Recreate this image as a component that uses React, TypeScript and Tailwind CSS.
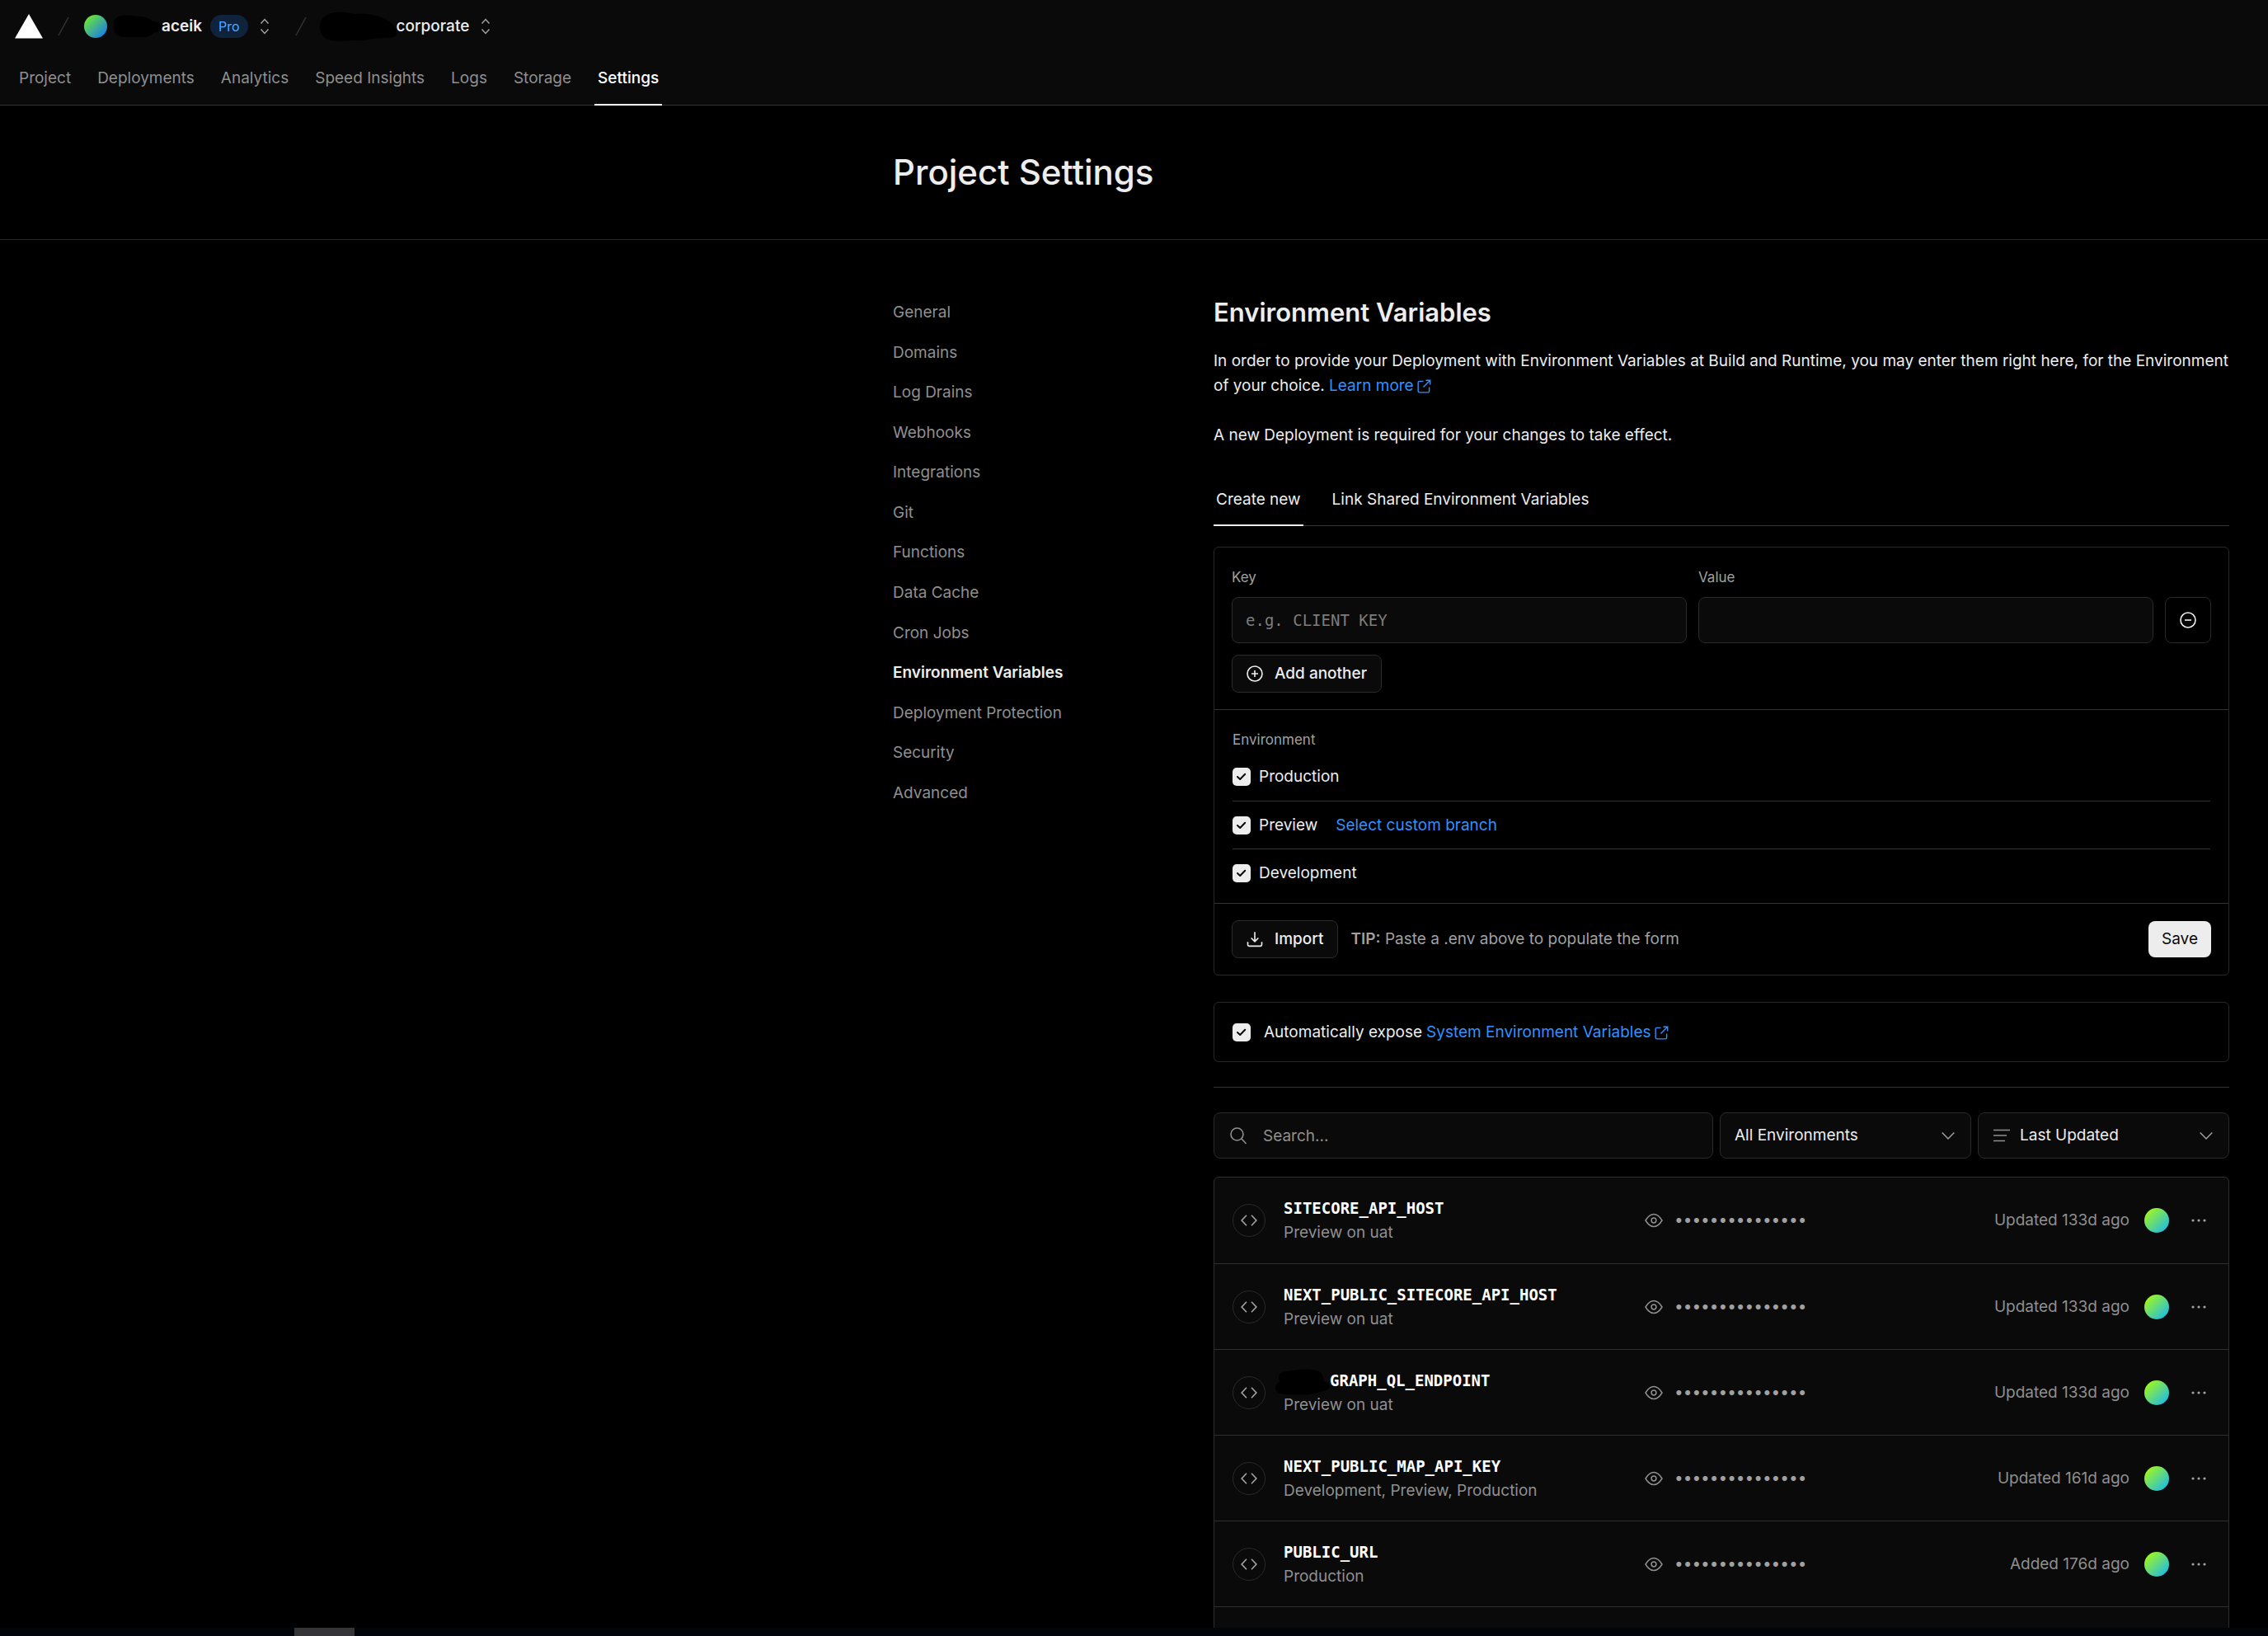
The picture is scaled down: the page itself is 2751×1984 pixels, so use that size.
import type { ReactNode } from "react";

const tabs = ["Project", "Deployments", "Analytics", "Speed Insights", "Logs", "Storage", "Settings"];

const sections = [
  "General",
  "Domains",
  "Log Drains",
  "Webhooks",
  "Integrations",
  "Git",
  "Functions",
  "Data Cache",
  "Cron Jobs",
  "Environment Variables",
  "Deployment Protection",
  "Security",
  "Advanced",
];

const variables = [
  { name: "SITECORE_API_HOST", scope: "Preview on uat", time: "Updated 133d ago" },
  { name: "NEXT_PUBLIC_SITECORE_API_HOST", scope: "Preview on uat", time: "Updated 133d ago" },
  { name: "GRAPH_QL_ENDPOINT", scope: "Preview on uat", time: "Updated 133d ago", redacted: true },
  { name: "NEXT_PUBLIC_MAP_API_KEY", scope: "Development, Preview, Production", time: "Updated 161d ago" },
  { name: "PUBLIC_URL", scope: "Production", time: "Added 176d ago" },
];

const mono = "font-['DejaVu_Sans_Mono',monospace]";

function Icon({ className, children }: { className: string; children: ReactNode }) {
  return (
    <svg
      viewBox="0 0 16 16"
      fill="none"
      stroke="currentColor"
      strokeWidth="1.3"
      className={className}
      aria-hidden="true"
    >
      {children}
    </svg>
  );
}

function Slash() {
  return (
    <svg viewBox="0 0 14 24" className="h-6 w-[14px] shrink-0" fill="none" stroke="#333" strokeWidth="1.5" aria-hidden="true">
      <path d="M13 1 1 23" />
    </svg>
  );
}

function Switcher({ label }: { label: string }) {
  return (
    <button aria-label={label} className="flex text-[#a1a1a1]">
      <svg viewBox="0 0 12 20" className="h-5 w-3" fill="none" stroke="currentColor" strokeWidth="1.5" aria-hidden="true">
        <path d="M1.500 6.500 6 1.500l4.500 5M1.500 13.500 6 18.500l4.500-5" />
      </svg>
    </button>
  );
}

function External() {
  return (
    <Icon className="ml-1 inline size-[17px] align-[-3px]">
      <path d="M7 2.200H2.600A1.500 1.500 0 0 0 1.100 3.700v9.700a1.500 1.500 0 0 0 1.500 1.500h9.700a1.500 1.500 0 0 0 1.500-1.500V9M9.800 1.200h5V6.200M14.800 1.200 7 9" />
    </Icon>
  );
}

function Chevron() {
  return (
    <Icon className="pointer-events-none absolute top-[19px] right-[19px] size-[18px] text-[#a1a1a1]">
      <path d="m1.500 4.800 6.500 6.700 6.500-6.700" />
    </Icon>
  );
}

function Check({ id }: { id: string }) {
  return (
    <span className="relative flex size-[22px] shrink-0">
      <input
        id={id}
        type="checkbox"
        defaultChecked
        className="size-[22px] appearance-none rounded-[5px] bg-[#ededed]"
      />
      <svg
        viewBox="0 0 22 22"
        className="pointer-events-none absolute inset-0 size-[22px]"
        fill="none"
        stroke="#0a0a0a"
        strokeWidth="2"
        strokeLinecap="round"
        strokeLinejoin="round"
        aria-hidden="true"
      >
        <path d="m6 11 3.200 3 6-6.200" />
      </svg>
    </span>
  );
}

function EnvironmentForm() {
  return (
    <form className="mt-[25px] rounded-md border border-[#292929]" onSubmit={(e) => e.preventDefault()}>
      <div className="px-[21px] py-5">
        <div className="flex items-end gap-[14px]">
          <div className="flex flex-1 flex-col">
            <label htmlFor="key" className="mb-2 text-[17px] leading-8 text-[#a1a1a1]">
              Key
            </label>
            <input
              id="key"
              placeholder="e.g. CLIENT_KEY"
              className={`${mono} h-14 w-full rounded-lg border border-[#2a2a2a] bg-[#0a0a0a] px-4 text-[19px] text-[#ededed] placeholder:text-[#7d7d7d]`}
            />
          </div>
          <div className="flex flex-1 flex-col">
            <label htmlFor="value" className="mb-2 text-[17px] leading-8 text-[#a1a1a1]">
              Value
            </label>
            <input
              id="value"
              className={`${mono} h-14 w-full rounded-lg border border-[#2a2a2a] bg-[#0a0a0a] px-4 text-[19px] text-[#ededed]`}
            />
          </div>
          <button
            type="button"
            aria-label="Remove"
            className="flex size-14 items-center justify-center rounded-lg border border-[#2a2a2a] text-[#ededed]"
          >
            <Icon className="size-5">
              <circle cx="8" cy="8" r="7.200" />
              <path d="M4.800 8h6.400" />
            </Icon>
          </button>
        </div>
        <button
          type="button"
          className="mt-[14px] flex h-[46px] items-center gap-[14px] rounded-lg border border-[#2a2a2a] bg-[#0a0a0a] px-[17px] font-medium"
        >
          <Icon className="size-5">
            <circle cx="8" cy="8" r="7.200" />
            <path d="M4.800 8h6.400M8 4.800v6.400" />
          </Icon>
          Add another
        </button>
      </div>

      <div role="group" aria-labelledby="environment" className="border-t border-[#333] px-[22px] pb-2">
        <p id="environment" className="pt-5 text-[17px] leading-8 text-[#a1a1a1]">
          Environment
        </p>
        <div className="flex h-[58px] items-center gap-[10px]">
          <Check id="production" />
          <label htmlFor="production">Production</label>
        </div>
        <div className="flex h-[58px] items-center gap-[10px] border-t border-[#333]">
          <Check id="preview" />
          <label htmlFor="preview">Preview</label>
          <button type="button" className="ml-3 text-[#3291ff]">
            Select custom branch
          </button>
        </div>
        <div className="flex h-[58px] items-center gap-[10px] border-t border-[#333]">
          <Check id="development" />
          <label htmlFor="development">Development</label>
        </div>
      </div>

      <div className="flex items-center border-t border-[#333] px-[21px] py-5">
        <button
          type="button"
          className="flex h-[46px] items-center gap-[14px] rounded-lg border border-[#2a2a2a] bg-[#0a0a0a] px-[17px] font-medium"
        >
          <Icon className="size-5">
            <path d="M8 1v9M4.500 6.800 8 10.300l3.500-3.500M1.200 10.500v2.700a1.500 1.500 0 0 0 1.500 1.500h10.600a1.500 1.500 0 0 0 1.500-1.500v-2.700" />
          </Icon>
          Import
        </button>
        <p className="ml-[15px] text-[#a1a1a1]">
          <b className="font-semibold">TIP:</b> Paste a .env above to populate the form
        </p>
        <button type="submit" className="ml-auto h-11 rounded-lg bg-[#ededed] px-4 text-[#0a0a0a]">
          Save
        </button>
      </div>
    </form>
  );
}

function Filters() {
  return (
    <div className="mt-[30px] flex gap-2">
      <div className="relative flex-1">
        <svg
          viewBox="0 0 22 24"
          className="pointer-events-none absolute top-4 left-[19px] h-6 w-[22px] text-[#8f8f8f]"
          fill="none"
          stroke="currentColor"
          strokeWidth="1.600"
          aria-hidden="true"
        >
          <circle cx="9.500" cy="10.500" r="7.500" />
          <path d="m15 16 5.500 6" />
        </svg>
        <input
          aria-label="Search"
          placeholder="Search..."
          className="h-14 w-full rounded-lg border border-[#2a2a2a] bg-[#0a0a0a] pr-4 pl-[59px] placeholder:text-[#8f8f8f]"
        />
      </div>
      <div className="relative w-[305px]">
        <select
          aria-label="Environment filter"
          className="h-14 w-full appearance-none rounded-lg border border-[#2a2a2a] bg-[#0a0a0a] px-[17px]"
        >
          <option>All Environments</option>
        </select>
        <Chevron />
      </div>
      <div className="relative w-[305px]">
        <svg
          viewBox="0 0 20 18"
          className="pointer-events-none absolute top-[19px] left-[19px] h-[18px] w-5 text-[#8f8f8f]"
          fill="none"
          stroke="currentColor"
          strokeWidth="1.600"
          aria-hidden="true"
        >
          <path d="M0 2.500h20M0 9h16M0 15.500h14" />
        </svg>
        <select
          aria-label="Sort order"
          className="h-14 w-full appearance-none rounded-lg border border-[#2a2a2a] bg-[#0a0a0a] pr-4 pl-[50px]"
        >
          <option>Last Updated</option>
        </select>
        <Chevron />
      </div>
    </div>
  );
}

function VariableRow({ item }: { item: (typeof variables)[number] }) {
  return (
    <li className="flex min-h-[104px] items-center border-t border-[#2e2e2e] px-[22px] text-[#8f8f8f] first:border-t-0">
      <span className="flex size-10 shrink-0 items-center justify-center rounded-full border border-[#292929]">
        <Icon className="h-5 w-5 text-[#a1a1a1]">
          <path d="M5.600 3 .9 8l4.700 5M10.400 3l4.700 5-4.700 5" />
        </Icon>
      </span>
      <div className="relative ml-[22px] w-[438px] leading-[29px]">
        {item.redacted && (
          <svg viewBox="0 0 66 32" className="absolute top-0 -left-[10px] h-8 w-[66px]" fill="#000" aria-hidden="true">
            <path d="M14 3C30 0 46-1 54 4c4 3 5 8 4 11 5 0 8 3 8 6-1 5-6 6-12 7-10 4-22 4-42 3-8 0-12-3-12-8 0-4 3-6 6-8C1 9 6 3 14 3Z" />
          </svg>
        )}
        <p className={`${mono} text-[19px] font-bold text-white ${item.redacted ? "pl-14" : ""}`}>{item.name}</p>
        <p>{item.scope}</p>
      </div>
      <button aria-label={`Reveal ${item.name}`} className="flex text-[#8f8f8f]">
        <svg viewBox="0 0 22 18" className="h-[18px] w-[22px]" fill="none" stroke="currentColor" strokeWidth="1.500" aria-hidden="true">
          <path d="M1 9c3-5 6.500-7.500 10-7.500S18 4 21 9c-3 5-6.500 7.500-10 7.500S4 14 1 9Z" />
          <circle cx="11" cy="9" r="2.900" />
        </svg>
      </button>
      <span className="ml-[14px] text-[#a1a1a1]">•••••••••••••••</span>
      <span className="ml-auto">{item.time}</span>
      <span className="ml-[18px] size-[30px] rounded-full bg-linear-135/srgb from-[#b4ff00] to-[#0cb4ff]" />
      <button aria-label={`Options for ${item.name}`} className="mr-[5px] ml-[27px] flex text-[#a1a1a1]">
        <svg viewBox="0 0 18 4" className="h-1 w-[18px]" fill="currentColor" aria-hidden="true">
          <circle cx="2" cy="2" r="1.600" />
          <circle cx="9" cy="2" r="1.600" />
          <circle cx="16" cy="2" r="1.600" />
        </svg>
      </button>
    </li>
  );
}

export default function App() {
  return (
    <div className="flex h-screen flex-col overflow-hidden bg-black font-['Inter',sans-serif] text-[19px] leading-[30px] text-[#ededed]">
      <header className="border-b border-[#333] bg-[#0a0a0a]">
        <div className="flex h-16 items-center pl-[18px]">
          <a href="#home" aria-label="Home">
            <svg viewBox="0 0 34 30" className="h-[30px] w-[34px]" fill="#fff" aria-hidden="true">
              <path d="m17 0 17 29.500H0Z" />
            </svg>
          </a>
          <span className="ml-[18px] flex">
            <Slash />
          </span>
          <span className="ml-[18px] size-7 rounded-full bg-linear-135/srgb from-[#79f51e] to-[#0d6fff]" />
          <svg viewBox="0 0 58 28" className="ml-2 h-7 w-[58px]" fill="#000" aria-hidden="true">
            <path d="M4 3C10-1 22 1 32 2c8 0 12 4 16 6 6 1 10 3 10 7 0 5-4 6-10 7-4 5-10 5-20 5C14 27 6 28 2 22-1 16-1 8 4 3Z" />
          </svg>
          <span className="font-semibold">aceik</span>
          <span className="ml-[10px] flex h-7 items-center rounded-full bg-[#10233d] px-[10px] text-base text-[#52a8ff]">
            Pro
          </span>
          <span className="ml-[14px] flex">
            <Switcher label="Switch team" />
          </span>
          <span className="ml-[31px] flex">
            <Slash />
          </span>
          <svg viewBox="0 0 94 36" className="ml-[15px] h-9 w-[94px]" fill="#000" aria-hidden="true">
            <path d="M10 4C18-1 32 0 44 3c14-1 30 1 40 8 7 5 11 11 10 16-1 5-8 5-16 5-14 0-22 4-38 3-14 1-28 2-34-4C-2 24-1 9 10 4Z" />
          </svg>
          <span className="font-medium">corporate</span>
          <span className="ml-[14px] flex">
            <Switcher label="Switch project" />
          </span>
        </div>
        <nav className="-mb-px flex gap-6 pl-[19px]">
          {tabs.map((tab) => (
            <a
              key={tab}
              href={`#${tab}`}
              className={
                tab === "Settings"
                  ? "border-b-2 border-white px-1 py-4 font-medium text-white"
                  : "border-b-2 border-transparent px-1 py-4 text-[#8f8f8f]"
              }
            >
              {tab}
            </a>
          ))}
        </nav>
      </header>

      <div className="border-b border-[#292929]">
        <div className="ml-auto max-w-[1668px] pr-12">
          <h1 className="py-[51px] text-[42px] leading-[60px] font-medium">Project Settings</h1>
        </div>
      </div>

      <div className="ml-auto flex min-h-0 w-full max-w-[1668px] flex-1 overflow-hidden pr-[47px]">
        <nav className="mt-[73px] flex h-[613px] w-[389px] shrink-0 flex-col justify-between text-[#8f8f8f]">
          {sections.map((s) => (
            <a
              key={s}
              href={`#${s}`}
              className={s === "Environment Variables" ? "font-semibold text-[#ededed]" : ""}
            >
              {s}
            </a>
          ))}
        </nav>

        <main className="min-w-0 flex-1 pt-[66px]">
          <h2 className="text-[31px] leading-[44px] font-semibold">Environment Variables</h2>
          <p className="mt-[22px]">
            In order to provide your Deployment with Environment Variables at Build and Runtime, you may enter them
            right here, for the Environment of your choice.{" "}
            <a href="#learn" className="text-[#3291ff]">
              Learn more
              <External />
            </a>
          </p>
          <p className="mt-[30px]">A new Deployment is required for your changes to take effect.</p>

          <div className="mt-12 flex gap-[35px] border-b border-[#333]">
            <button className="-mb-px border-b-2 border-[#ededed] px-[3px] pb-[15px]">Create new</button>
            <button className="-mb-px border-b-2 border-transparent pb-[15px]">Link Shared Environment Variables</button>
          </div>

          <EnvironmentForm />

          <div className="mt-8 flex h-[73px] items-center rounded-md border border-[#292929] px-[22px]">
            <Check id="expose" />
            <label htmlFor="expose" className="ml-4">
              Automatically expose
            </label>
            <a href="#system" className="ml-[5px] text-[#3291ff]">
              System Environment Variables
              <External />
            </a>
          </div>

          <hr className="mt-[30px] border-[#333]" />

          <Filters />

          <ul className="mt-[22px] h-[800px] rounded-md border border-[#2e2e2e] bg-[#0a0a0a]">
            {variables.map((item) => (
              <VariableRow key={item.name} item={item} />
            ))}
            <li className="min-h-[104px] border-t border-[#2e2e2e]" />
          </ul>
        </main>
      </div>

      <footer className="h-[10px] shrink-0 bg-[#010409] pl-[357px]">
        <div className="h-full w-[73px] bg-[#353538]" />
      </footer>
    </div>
  );
}
